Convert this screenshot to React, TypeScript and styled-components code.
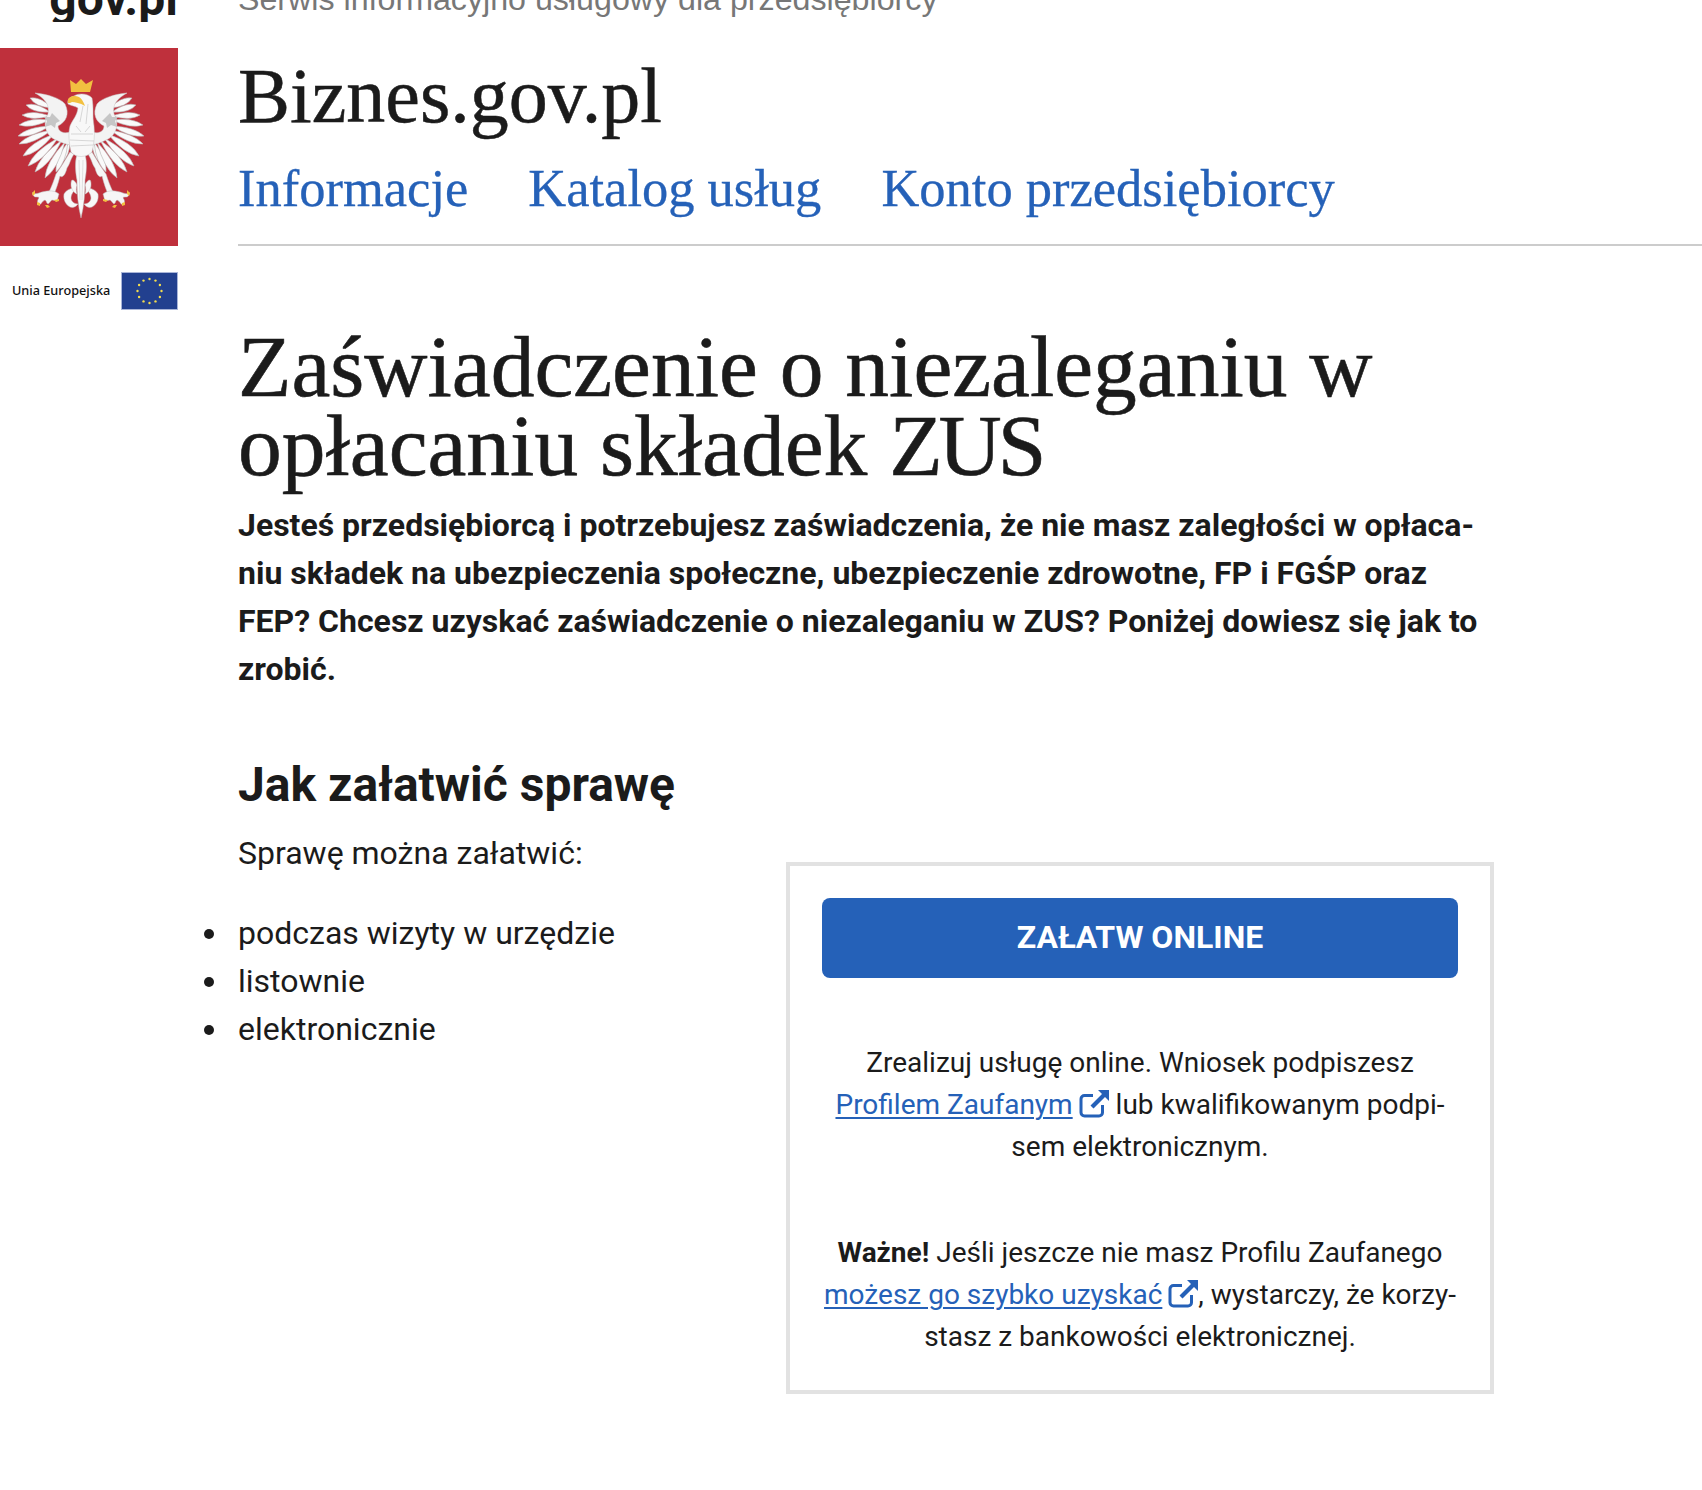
import { FC } from "react"
import styled, { createGlobalStyle } from "styled-components"

const Global = createGlobalStyle`
  body {
    margin: 0;
    background: #fff;
    color: #1b1b1b;
    font-family: Roboto, "Liberation Sans", sans-serif;
  }
`

const Page = styled.div`
  display: grid;
  grid-template-columns: 178px 1fr;
  grid-template-rows: 22px auto;
  column-gap: 60px;
  min-height: 1490px;
  overflow: hidden;
`

const TopClip = styled.div<{ $right?: boolean }>`
  height: 22px;
  overflow: hidden;
  display: flex;
  align-items: flex-end;
  justify-content: ${(p) => (p.$right ? "flex-end" : "flex-start")};
`

const GovMark = styled.div`
  font: 700 48px/46px Roboto, sans-serif;
  white-space: nowrap;
`

const ServiceLine = styled.div`
  font: 400 32.2px/34px "Liberation Sans", Arial, sans-serif;
  color: #777;
  padding-bottom: 6px;
  white-space: nowrap;
`

const Sidebar = styled.aside`
  padding-top: 26px;
`

const EmblemBox = styled.div`
  width: 178px;
  height: 198px;
  background: #bf303c;
  svg {
    display: block;
  }
`

const EuRow = styled.div`
  display: flex;
  align-items: center;
  justify-content: space-between;
  margin-top: 26px;
  padding-left: 12px;
`

const EuLabel = styled.span`
  font: 500 12.7px/16px "Noto Sans", sans-serif;
  color: #111;
  padding-bottom: 2px;
`

const Main = styled.main`
  min-width: 0;
`

const Header = styled.header`
  padding-top: 30px;
  height: 192px;
  box-sizing: content-box;
  border-bottom: 2px solid #ccc;
`

const Brand = styled.div`
  font: 400 78px/88px "Liberation Serif", serif;
  -webkit-text-stroke: 0.5px #1b1b1b;
  color: #1b1b1b;
  white-space: nowrap;
`

const Nav = styled.nav`
  display: flex;
  gap: 60px;
  margin-top: 15px;
`

const NavLink = styled.a`
  font: 400 52.5px/66px "Liberation Serif", serif;
  -webkit-text-stroke: 0.3px #2561b8;
  color: #2561b8;
  white-space: nowrap;
`

const Content = styled.div`
  width: 1256px;
`

const Title = styled.h1`
  margin: 81px 0 0;
  font: 400 87.5px/79px "Liberation Serif", serif;
  -webkit-text-stroke: 0.6px #1b1b1b;
  color: #1b1b1b;
`

// this serif runs wider on capitals than the one in the picture
const TightCaps = styled.span`
  letter-spacing: -4px;
`

const Lead = styled.p`
  margin: 16px 0 0;
  font: 700 32px/48px Roboto, sans-serif;
  hyphens: manual;
`

const Columns = styled.div`
  display: grid;
  grid-template-columns: 548px 708px;
`

const SectionTitle = styled.h2`
  margin: 62px 0 0;
  font: 700 48px/60px Roboto, sans-serif;
`

const Paragraph = styled.p`
  margin: 14px 0 0;
  font: 400 32px/48px Roboto, sans-serif;
`

const Options = styled.ul`
  margin: 32px 0 0;
  padding: 0;
  list-style: none;
  font: 400 32px/48px Roboto, sans-serif;
`

const OptionItem = styled.li`
  position: relative;
  &::before {
    content: "";
    position: absolute;
    left: -34px;
    top: 20px;
    width: 10px;
    height: 10px;
    border-radius: 50%;
    background: #1b1b1b;
  }
`

const OnlineBox = styled.section`
  box-sizing: border-box;
  margin-top: 169px;
  height: 532px;
  border: 4px solid #e2e2e2;
  padding: 32px 32px 0;
  text-align: center;
  font: 400 28px/42px Roboto, sans-serif;
`

const OnlineButton = styled.a`
  display: flex;
  align-items: center;
  justify-content: center;
  height: 80px;
  padding-bottom: 2px;
  box-sizing: border-box;
  border-radius: 8px;
  background: #2561b8;
  color: #fff;
  font: 700 32px/40px Roboto, sans-serif;
`

const BoxText = styled.p<{ $gap: number }>`
  margin: ${(p) => p.$gap}px -4px 0;
  hyphens: manual;
`

const ExternalAnchor = styled.a`
  color: #2561b8;
  text-decoration: underline;
  text-decoration-thickness: 2px;
  text-underline-offset: 3px;
  svg {
    display: inline-block;
    vertical-align: -4px;
    margin-left: 6px;
  }
`

const Strong = styled.strong`
  font-weight: 700;
`

const ExternalIcon: FC = () => (
  <svg width="30" height="28" viewBox="0 0 30 28">
    <path
      d="M14 5.5H5.5a3.5 3.5 0 0 0-3.5 3.5V22.5a3.5 3.5 0 0 0 3.5 3.5H20a3.5 3.5 0 0 0 3.5-3.5V15"
      fill="none"
      stroke="#2561b8"
      strokeWidth="3"
    />
    <path d="M19 0H30V11L26 7L14.5 18.5L11.5 15.5L23 4Z" fill="#2561b8" />
  </svg>
)

const ExternalLink: FC<{ children: string }> = ({ children }) => (
  <ExternalAnchor>
    {children}
    <ExternalIcon />
  </ExternalAnchor>
)

// right wing feathers: base x, base y, tip x, tip y, half width. The left wing is mirrored
const feathers: [number, number, number, number, number][] = [
  [92, 94, 100, 114, 5],
  [94, 94, 106, 124, 6],
  [97, 94, 117, 130, 7],
  [100, 92, 127, 124, 7],
  [104, 90, 134, 118, 7],
  [108, 86, 139, 108, 7],
  [110, 82, 143, 96, 6],
  [112, 78, 144, 88, 6],
  [112, 72, 143, 77, 6],
  [112, 68, 140, 67, 6],
  [112, 64, 136, 57, 6],
  [110, 60, 132, 50, 6],
]

const feather = (bx: number, by: number, tx: number, ty: number, w: number) => {
  const dx = tx - bx
  const dy = ty - by
  const len = Math.hypot(dx, dy)
  const nx = (-dy / len) * w
  const ny = (dx / len) * w
  const mx = bx + dx * 0.65
  const my = by + dy * 0.65
  return `M${bx} ${by}Q${mx + nx} ${my + ny} ${tx} ${ty}Q${mx - nx} ${my - ny} ${bx} ${by}Z`
}

const Wing: FC = () => (
  <g>
    {feathers.map(([bx, by, tx, ty, w], i) => (
      <path key={i} d={feather(bx, by, tx, ty, w)} fill="#fafafa" stroke="#b4b4b4" strokeWidth={0.6} />
    ))}
    <path
      d="M92 97V84C98 86 104 84 104 78C96 74 92 66 97 56C102 50 115 46 127 45C118 50 112 56 114 66C120 76 116 88 106 92C100 95 96 96 92 97Z"
      fill="#f3f3f3"
      stroke="#c8c8c8"
      strokeWidth={0.5}
    />
    <path d="M105 70l5-5 2 4 6 0-3 4 2 6-6-2-4 3-1-5-4-2z" fill="#c6c6c6" />
    {/* thigh and leg */}
    <path
      d="M88 106C92 112 92 116 95 120C97 128 100 130 102 128C104 136 106 142 109 148L114 146C110 138 108 132 106 126C100 118 97 112 92 104Z"
      fill="#f6f6f6"
      stroke="#bfbfbf"
      strokeWidth={0.5}
    />
    {/* foot and toes */}
    <path
      d="M103 146c6-5 14-3 20-1 3 1 5 1 6-1 1 3-1 5-3 5-2 0-3 0-3 1 2 2 2 5 0 7-2 0-3-4-6-5-2 1-1 3-3 4-2-1-2-3-4-4-2 0-3 1-5 1-1-2-1-5-2-7z"
      fill="#f6f6f6"
      stroke="#bdbdbd"
      strokeWidth={0.5}
    />
    <path d="M127 142l3 3-1 3-2-2zM122 155l3-1 0 3-3 1zM114 157l3 0-2 3-3-1zM103 151l5 1-2 2-3-1z" fill="#f2c040" />
  </g>
)

const Emblem: FC = () => (
  <svg width="178" height="198" viewBox="0 0 178 198">
    <Wing />
    <g transform="translate(162 0) scale(-1 1)">
      <Wing />
    </g>
    {/* tail */}
    <path
      d="M64 146c3-5 8-6 12-6-2 3-5 6-5 10 0 3 3 6 7 6-2 3-5 4-8 3-4-2-7-7-6-13zM98 146c-3-5-8-6-12-6 2 3 5 6 5 10 0 3-3 6-7 6 2 3 5 4 8 3 4-2 7-7 6-13z"
      fill="#f8f8f8"
      stroke="#c0c0c0"
      strokeWidth={0.5}
    />
    <path
      d="M72 132c2 0 4 2 5 5-1 3-1 6 0 9-3-1-6-5-6-9 0-2 0-4 1-5zM90 132c-2 0-4 2-5 5 1 3 1 6 0 9 3-1 6-5 6-9 0-2 0-4-1-5z"
      fill="#f8f8f8"
      stroke="#c0c0c0"
      strokeWidth={0.5}
    />
    <path
      d="M81 100C74 106 75 122 77 132C77 146 78 158 81 170C84 158 85 146 85 132C87 122 88 106 81 100Z"
      fill="#f9f9f9"
      stroke="#bdbdbd"
      strokeWidth={0.5}
    />
    <path d="M79 112l1 40M83 112l-1 40" stroke="#cfcfcf" strokeWidth={0.6} fill="none" />
    {/* neck and body */}
    <path
      d="M70 78C73 71 77 68 78 60C75 58 72 58 68 56C67 52 70 49 74 48C78 45 88 45 92 50C94 60 92 68 94 78C95 88 94 96 92 104C86 110 76 110 71 104C69 94 68 86 70 78Z"
      fill="#f8f8f8"
      stroke="#c4c4c4"
      strokeWidth={0.5}
    />
    <path
      d="M71 86l22 0M70 92l24 1M71 98l22-1M83 58l-3 16M88 56l-2 20M76 78l5 6M90 78l-5 6"
      stroke="#c9c9c9"
      strokeWidth={0.7}
      fill="none"
    />
    {/* beak and crown */}
    <path d="M68 55c-1-5 2-7 7-7 5 0 8 4 10 10-5-3-10-4-13-4-1 1-3 1-4 1z" fill="#f2c040" />
    <path d="M71 44l-1-12 6 4 5-5 5 5 7-4-3 12z" fill="#f2c040" />
  </svg>
)

const euStars = Array.from({ length: 12 }, (_, i) => {
  const a = (i * Math.PI) / 6
  return { x: 28.5 + Math.sin(a) * 12, y: 19 - Math.cos(a) * 12 }
})

const EuFlag: FC = () => (
  <svg width="57" height="38" viewBox="0 0 57 38">
    <rect x="0.5" y="0.5" width="56" height="37" fill="#22408f" stroke="#a9b5d8" />
    {euStars.map((s, i) => (
      <circle key={i} cx={s.x} cy={s.y} r="1.2" fill="#f3dc4e" />
    ))}
  </svg>
)

export default function App() {
  return (
    <>
      <Global />
      <Page>
        <TopClip $right>
          <GovMark>gov.pl</GovMark>
        </TopClip>
        <TopClip>
          <ServiceLine>Serwis informacyjno usługowy dla przedsiębiorcy</ServiceLine>
        </TopClip>
        <Sidebar>
          <EmblemBox>
            <Emblem />
          </EmblemBox>
          <EuRow>
            <EuLabel>Unia Europejska</EuLabel>
            <EuFlag />
          </EuRow>
        </Sidebar>
        <Main>
          <Header>
            <Brand>Biznes.gov.pl</Brand>
            <Nav>
              <NavLink>Informacje</NavLink>
              <NavLink>Katalog usług</NavLink>
              <NavLink>Konto przedsiębiorcy</NavLink>
            </Nav>
          </Header>
          <Content>
            <Title>
              Zaświadczenie o niezaleganiu w opłacaniu składek <TightCaps>ZUS</TightCaps>
            </Title>
            <Lead>
              Jesteś przedsiębiorcą i potrzebujesz zaświadczenia, że nie masz zaległości w opłaca{"\u00AD"}niu
              składek na ubezpieczenia społeczne, ubezpieczenie zdrowotne, FP i FGŚP oraz FEP? Chcesz uzyskać
              zaświadczenie o niezaleganiu w ZUS? Poniżej dowiesz się jak to zrobić.
            </Lead>
            <Columns>
              <div>
                <SectionTitle>Jak załatwić sprawę</SectionTitle>
                <Paragraph>Sprawę można załatwić:</Paragraph>
                <Options>
                  <OptionItem>podczas wizyty w urzędzie</OptionItem>
                  <OptionItem>listownie</OptionItem>
                  <OptionItem>elektronicznie</OptionItem>
                </Options>
              </div>
              <OnlineBox>
                <OnlineButton>ZAŁATW ONLINE</OnlineButton>
                <BoxText $gap={64}>
                  Zrealizuj usługę online. Wniosek podpiszesz <ExternalLink>Profilem Zaufanym</ExternalLink> lub
                  kwalifikowanym podpi{"\u00AD"}sem elektronicznym.
                </BoxText>
                <BoxText $gap={64}>
                  <Strong>Ważne!</Strong> Jeśli jeszcze nie masz Profilu Zaufanego{" "}
                  <ExternalLink>możesz go szybko uzyskać</ExternalLink>, wystarczy, że korzy{"\u00AD"}stasz z
                  bankowości elektronicznej.
                </BoxText>
              </OnlineBox>
            </Columns>
          </Content>
        </Main>
      </Page>
    </>
  )
}
